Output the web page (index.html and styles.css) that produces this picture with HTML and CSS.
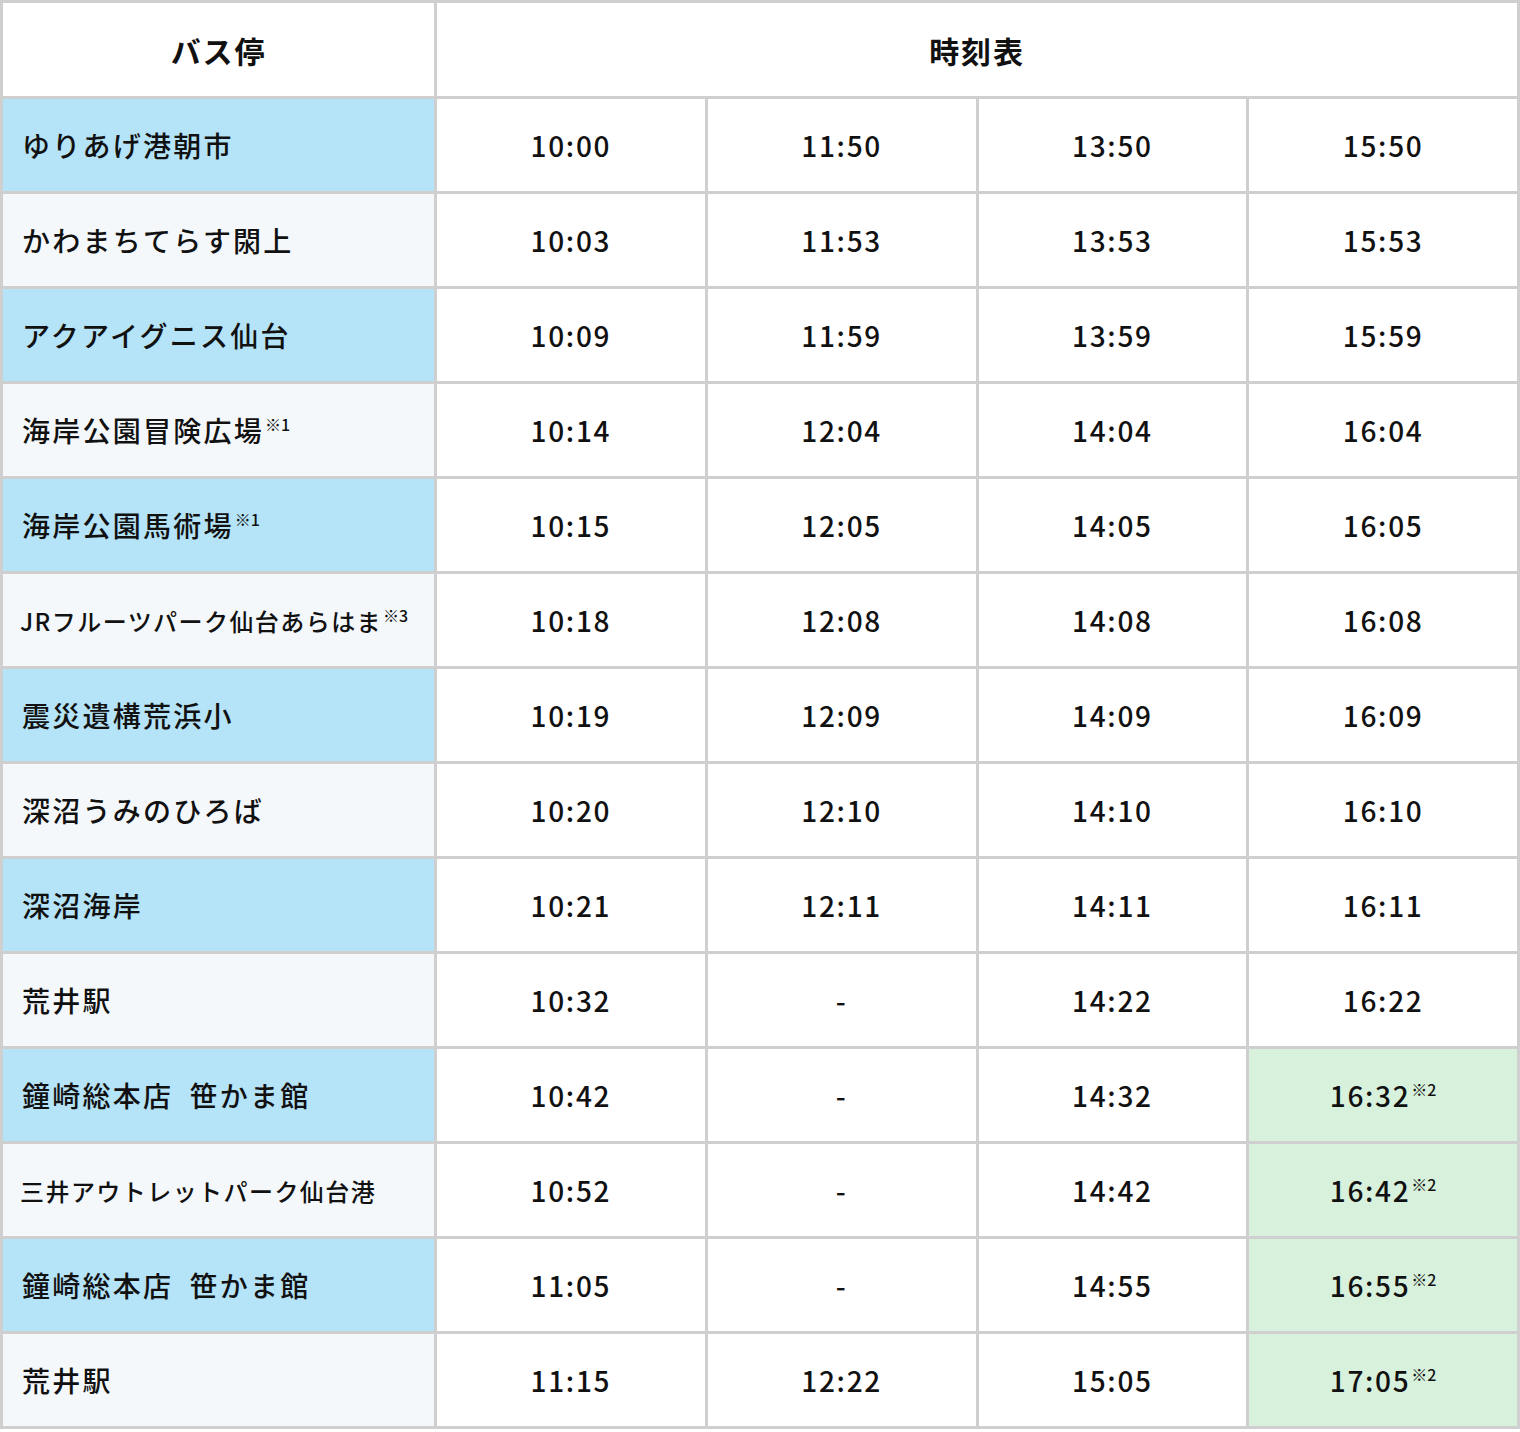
FILE: index.html
```html
<!DOCTYPE html>
<html lang="ja">
<head>
<meta charset="utf-8">
<title>時刻表</title>
<link rel="stylesheet" href="styles.css">
</head>
<body>
<table class="timetable">
  <colgroup>
    <col class="col-stop">
    <col class="col-time">
    <col class="col-time">
    <col class="col-time">
    <col class="col-time">
  </colgroup>
  <thead>
    <tr class="head-row">
      <th class="head">バス停</th>
      <th class="head" colspan="4">時刻表</th>
    </tr>
  </thead>
  <tbody>
    <tr><td class="stop stop-blue">ゆりあげ港朝市</td><td class="time">10:00</td><td class="time">11:50</td><td class="time">13:50</td><td class="time">15:50</td></tr>
    <tr><td class="stop stop-light">かわまちてらす閖上</td><td class="time">10:03</td><td class="time">11:53</td><td class="time">13:53</td><td class="time">15:53</td></tr>
    <tr><td class="stop stop-blue">アクアイグニス仙台</td><td class="time">10:09</td><td class="time">11:59</td><td class="time">13:59</td><td class="time">15:59</td></tr>
    <tr><td class="stop stop-light">海岸公園冒険広場<sup class="note">※1</sup></td><td class="time">10:14</td><td class="time">12:04</td><td class="time">14:04</td><td class="time">16:04</td></tr>
    <tr><td class="stop stop-blue">海岸公園馬術場<sup class="note">※1</sup></td><td class="time">10:15</td><td class="time">12:05</td><td class="time">14:05</td><td class="time">16:05</td></tr>
    <tr><td class="stop stop-light stop-small">JRフルーツパーク仙台あらはま<sup class="note">※3</sup></td><td class="time">10:18</td><td class="time">12:08</td><td class="time">14:08</td><td class="time">16:08</td></tr>
    <tr><td class="stop stop-blue">震災遺構荒浜小</td><td class="time">10:19</td><td class="time">12:09</td><td class="time">14:09</td><td class="time">16:09</td></tr>
    <tr><td class="stop stop-light">深沼うみのひろば</td><td class="time">10:20</td><td class="time">12:10</td><td class="time">14:10</td><td class="time">16:10</td></tr>
    <tr><td class="stop stop-blue">深沼海岸</td><td class="time">10:21</td><td class="time">12:11</td><td class="time">14:11</td><td class="time">16:11</td></tr>
    <tr><td class="stop stop-light">荒井駅</td><td class="time">10:32</td><td class="time">-</td><td class="time">14:22</td><td class="time">16:22</td></tr>
    <tr><td class="stop stop-blue">鐘崎総本店&ensp;笹かま館</td><td class="time">10:42</td><td class="time">-</td><td class="time">14:32</td><td class="time time-green">16:32<sup class="note">※2</sup></td></tr>
    <tr><td class="stop stop-light stop-small">三井アウトレットパーク仙台港</td><td class="time">10:52</td><td class="time">-</td><td class="time">14:42</td><td class="time time-green">16:42<sup class="note">※2</sup></td></tr>
    <tr><td class="stop stop-blue">鐘崎総本店&ensp;笹かま館</td><td class="time">11:05</td><td class="time">-</td><td class="time">14:55</td><td class="time time-green">16:55<sup class="note">※2</sup></td></tr>
    <tr><td class="stop stop-light">荒井駅</td><td class="time">11:15</td><td class="time">12:22</td><td class="time">15:05</td><td class="time time-green">17:05<sup class="note">※2</sup></td></tr>
  </tbody>
</table>
</body>
</html>
```

FILE: styles.css
```css
html, body {
  margin: 0;
  padding: 0;
  background: #ffffff;
}

body {
  font-family: "Noto Sans CJK JP", "Noto Sans", sans-serif;
  color: #111111;
}

.timetable {
  width: 1520px;
  border-collapse: collapse;
  table-layout: fixed;
  border: 3px solid #cfcfcf;
}

.col-stop {
  width: 434px;
}

.timetable th,
.timetable td {
  border: 3px solid #cfcfcf;
  padding: 0;
  vertical-align: middle;
  letter-spacing: 0.08em;
  font-weight: 500;
}

.head-row th {
  height: 93px;
}

.timetable .head {
  background: #ffffff;
  font-size: 30px;
  font-weight: 700;
  letter-spacing: 0.06em;
  text-align: center;
}

.timetable tbody td {
  height: 92px;
}

.timetable .stop {
  font-size: 28px;
  text-align: left;
  padding-left: 19px;
  white-space: nowrap;
}

.timetable .stop-small {
  font-size: 24px;
  letter-spacing: 0.06em;
  padding-left: 17px;
}

.stop-blue {
  background: #b5e3f7;
}

.stop-light {
  background: #f4f8fb;
}

.timetable .time {
  font-size: 28px;
  letter-spacing: 0.06em;
  text-align: center;
  background: #ffffff;
}

.timetable .time-green {
  background: #d8f1dc;
}

.note {
  font-size: 16px;
  letter-spacing: 0;
  vertical-align: 0;
  position: relative;
  top: -11px;
  margin-left: 1px;
}

.stop-small .note {
  top: -9px;
}
```
